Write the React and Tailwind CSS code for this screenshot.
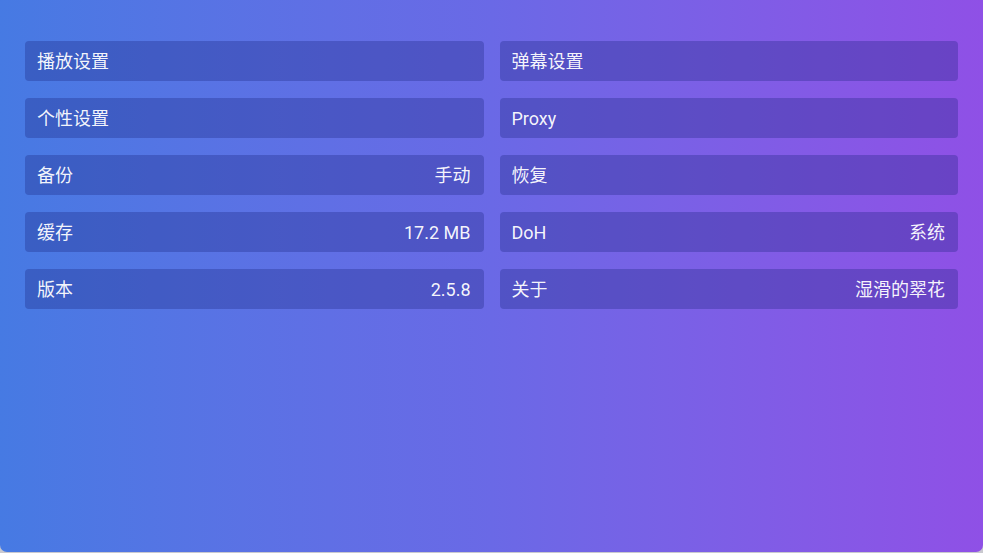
const rows = [
  [{ label: '播放设置' }, { label: '弹幕设置' }],
  [{ label: '个性设置' }, { label: 'Proxy' }],
  [{ label: '备份', value: '手动' }, { label: '恢复' }],
  [{ label: '缓存', value: '17.2 MB' }, { label: 'DoH', value: '系统' }],
  [{ label: '版本', value: '2.5.8' }, { label: '关于', value: '湿滑的翠花' }],
];

function Item({ label, value }) {
  return (
    <button className="h-10 rounded-[4px] bg-[#18207a]/30 pl-3 pr-[13px] flex items-center justify-between text-[18px] text-white/95 text-left">
      <span>{label}</span>
      {value && <span>{value}</span>}
    </button>
  );
}

export default function App() {
  return (
    <div
      className="w-[983px] h-[553px] bg-[#c9c9cf]"
      style={{ fontFamily: 'Roboto, "Noto Sans CJK SC", sans-serif' }}
    >
      <div className="h-[552px] rounded-b-[7px] bg-gradient-to-r from-[#467ae3] via-[#6a69e6] to-[#8f50e6] px-[25px] pt-[41px]">
        <div className="grid grid-cols-2 gap-x-4 gap-y-[17px]">
          {rows.flat().map((it) => (
            <Item key={it.label} {...it} />
          ))}
        </div>
      </div>
    </div>
  );
}
